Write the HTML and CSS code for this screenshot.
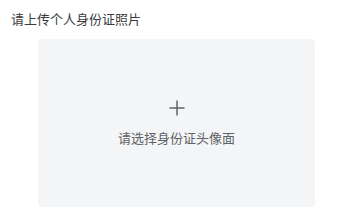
FILE: index.html
```html
<!DOCTYPE html>
<html lang="zh">
<head>
<meta charset="utf-8">
<link rel="stylesheet" href="styles.css">
</head>
<body>
<div class="page">
  <div class="title">请上传个人身份证照片</div>
  <div class="upload">
    <svg class="plus" width="16" height="16" viewBox="0 0 16 16">
      <path d="M8 0.5V15.5M0.5 8H15.5" stroke="#5f6166" stroke-width="1.5" fill="none"/>
    </svg>
    <div class="hint">请选择身份证头像面</div>
  </div>
</div>
</body>
</html>
```
FILE: styles.css
```css
html, body {
  margin: 0;
  padding: 0;
  background: #ffffff;
}
.page {
  width: 351px;
  height: 220px;
  font-family: "Noto Sans CJK SC", "Noto Sans", sans-serif;
}
.title {
  padding: 9px 0 0 11px;
  height: 30px;
  box-sizing: border-box;
  font-size: 13px;
  line-height: 19px;
  color: #3a3b3d;
}
.upload {
  margin: 9px 0 0 38px;
  width: 277px;
  height: 168px;
  background: #f4f5f7;
  border-radius: 4px;
  display: flex;
  flex-direction: column;
  align-items: center;
  justify-content: center;
}
.plus {
  display: block;
}
.hint {
  margin-top: 12px;
  font-size: 13px;
  line-height: 19px;
  color: #606266;
}
```
